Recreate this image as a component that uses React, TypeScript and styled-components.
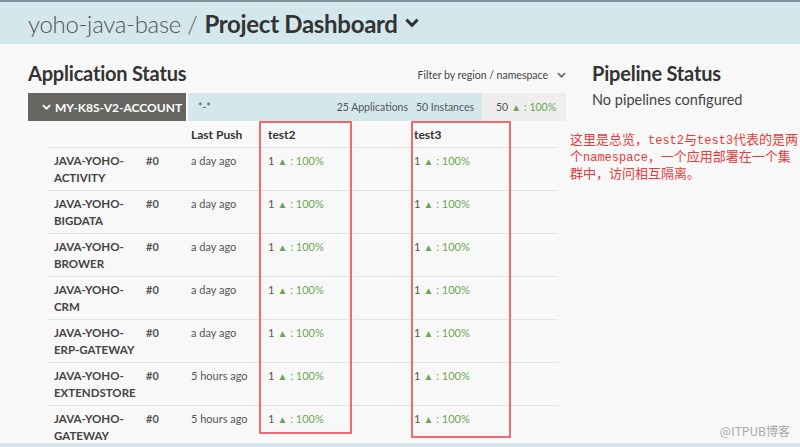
import React from "react";
import styled, { createGlobalStyle } from "styled-components";

const Global = createGlobalStyle`
  html, body { margin: 0; padding: 0; background: #f8f8f8; }
  body { font-family: "Lato", "Open Sans", sans-serif; color: #333; width: 800px; height: 447px; overflow: hidden; }
`;

const Page = styled.div`
  position: relative;
  width: 800px;
  height: 447px;
  display: flex;
  flex-direction: column;
  background: #f8f8f8;
`;

const Header = styled.header`
  height: 44px;
  flex-shrink: 0;
  border-top: 2px solid #7d939c;
  background: #d3e7ec;
  display: flex;
  align-items: center;
  padding: 0 0 0 28px;
  box-sizing: border-box;
  font-size: 24px;
  color: #555;
  letter-spacing: -0.3px;
`;

const Light = styled.span`
  font-weight: 300;
  margin-right: 7px;
`;

const Strong = styled.span`
  font-weight: 700;
  color: #333;
  display: flex;
  align-items: center;
  gap: 7px;
`;

const Main = styled.main`
  flex: 1;
  min-height: 0;
  overflow: hidden;
  display: flex;
  align-items: flex-start;
  padding: 11px 0 0 28px;
  gap: 26px;
`;

const Left = styled.section`
  width: 538px;
  flex-shrink: 0;
  display: flex;
  flex-direction: column;
`;

const TitleRow = styled.div`
  display: flex;
  flex-shrink: 0;
  justify-content: space-between;
  align-items: flex-end;
  height: 30px;
  margin-bottom: 8px;
`;

const H2 = styled.h2`
  margin: 0;
  font-size: 20px;
  font-weight: 700;
  color: #333;
  letter-spacing: -0.2px;
`;

const Filter = styled.div`
  font-size: 10.5px;
  color: #444;
  display: flex;
  align-items: center;
  gap: 9px;
  padding-bottom: 4px;
`;

const AccountBar = styled.div`
  display: flex;
  flex-shrink: 0;
  height: 28px;
  font-size: 10.5px;
`;

const Account = styled.div`
  width: 158px;
  background: #666562;
  color: #fff;
  font-weight: 700;
  font-size: 12px;
  display: flex;
  align-items: center;
  gap: 4px;
  padding-left: 14px;
  box-sizing: border-box;
  margin-right: 2px;
`;

const Summary = styled.div`
  flex: 1;
  background: #d3e7ec;
  display: flex;
  align-items: center;
  padding: 0 8px 0 10px;
  color: #555;
`;

const Spacer = styled.span`
  flex: 1;
`;

const Count = styled.span`
  margin-left: 8px;
`;

const Totals = styled.div`
  width: 84px;
  background: #eeeeee;
  display: flex;
  align-items: center;
  padding-left: 14px;
  box-sizing: border-box;
  color: #555;
`;

const Table = styled.div`
  margin-left: 20px;
  width: 510px;
`;

const Row = styled.div<{ $head?: boolean }>`
  display: grid;
  grid-template-columns: 98px 45px 77px 146px 1fr;
  height: ${(p) => (p.$head ? "26px" : "42px")};
  border-bottom: 1px solid #e3e3e3;
  box-sizing: content-box;
  align-items: ${(p) => (p.$head ? "center" : "start")};
  font-size: 11px;
  color: #555;
`;

const HeadCell = styled.div`
  font-weight: 700;
  font-size: 12px;
  color: #333;
`;

const Name = styled.div`
  padding: 4px 0 0 6px;
  font-weight: 700;
  font-size: 11.5px;
  line-height: 17px;
  color: #444;
`;

const Cell = styled.div`
  padding-top: 4px;
  line-height: 17px;
`;

const BoldCell = styled(Cell)`
  font-weight: 700;
  color: #555;
`;

const Health = styled.span`
  color: #555;
  span { color: #6aa84f; }
  i { font-style: normal; color: #6aa84f; font-size: 10px; margin: 0 3px; }
`;

const Right = styled.section`
  display: flex;
  flex-direction: column;
  width: 210px;
`;

const PipeTitle = styled(H2)`
  height: 30px;
  display: flex;
  align-items: flex-end;
`;

const NoPipe = styled.div`
  font-size: 14.5px;
  line-height: 18px;
  color: #444;
  margin-top: 6px;
`;

const Note = styled.div`
  margin: 21px 0 0 -22px;
  width: 232px;
  font-family: "Noto Sans CJK SC", "Liberation Mono", monospace;
  font-size: 13px;
  line-height: 17px;
  color: #e83b3b;
`;

const Mono = styled.span`
  font-family: "Liberation Mono", monospace;
  font-size: 12px;
  line-height: 0;
`;

const RedBox = styled.div<{ $x: number; $y: number; $w: number; $h: number }>`
  position: absolute;
  left: ${(p) => p.$x}px;
  top: ${(p) => p.$y}px;
  width: ${(p) => p.$w}px;
  height: ${(p) => p.$h}px;
  border: 2px solid #ec6a70;
  box-sizing: border-box;
  pointer-events: none;
`;

const Footer = styled.div`
  height: 4px;
  flex-shrink: 0;
  background: #d3e7ec;
`;

const Watermark = styled.div`
  position: absolute;
  right: 10px;
  bottom: 8px;
  font-family: "Noto Sans CJK SC", sans-serif;
  font-size: 12px;
  color: #a9a9a9;
`;

const Chevron = ({ size = 10, color = "currentColor" }: { size?: number; color?: string }) => (
  <svg width={size} height={size * 0.7} viewBox="0 0 10 7">
    <path d="M1 1.2 L5 5.2 L9 1.2" fill="none" stroke={color} strokeWidth="2.2" />
  </svg>
);

const Hl = ({ n }: { n: number }) => (
  <Health>
    {n}
    <i>▲</i>
    <span>: 100%</span>
  </Health>
);

const apps = [
  ["ACTIVITY", "a day ago"],
  ["BIGDATA", "a day ago"],
  ["BROWER", "a day ago"],
  ["CRM", "a day ago"],
  ["ERP-GATEWAY", "a day ago"],
  ["EXTENDSTORE", "5 hours ago"],
  ["GATEWAY", "5 hours ago"],
];

export default function App() {
  return (
    <Page>
      <Global />
      <Header>
        <Light>yoho-java-base /</Light>
        <Strong>
          Project Dashboard <Chevron size={14} color="#333" />
        </Strong>
      </Header>
      <Main>
        <Left>
          <TitleRow>
            <H2>Application Status</H2>
            <Filter>
              Filter by region / namespace <Chevron size={9} color="#777" />
            </Filter>
          </TitleRow>
          <AccountBar>
            <Account>
              <Chevron size={9} color="#fff" /> MY-K8S-V2-ACCOUNT
            </Account>
            <Summary>
              *-*
              <Spacer />
              25 Applications
              <Count>50 Instances</Count>
            </Summary>
            <Totals>
              <Hl n={50} />
            </Totals>
          </AccountBar>
          <Table>
            <Row $head>
              <div />
              <div />
              <HeadCell>Last Push</HeadCell>
              <HeadCell>test2</HeadCell>
              <HeadCell>test3</HeadCell>
            </Row>
            {apps.map(([n, t]) => (
              <Row key={n}>
                <Name>
                  JAVA-YOHO-
                  <br />
                  {n}
                </Name>
                <BoldCell>#0</BoldCell>
                <Cell>{t}</Cell>
                <Cell>
                  <Hl n={1} />
                </Cell>
                <Cell>
                  <Hl n={1} />
                </Cell>
              </Row>
            ))}
          </Table>
        </Left>
        <Right>
          <PipeTitle>Pipeline Status</PipeTitle>
          <NoPipe>No pipelines configured</NoPipe>
          <Note>
            这里是总览，<Mono>test2</Mono>与<Mono>test3</Mono>代表的是两个<Mono>namespace</Mono>，一个应用部署在一个集群中，访问相互隔离。
          </Note>
        </Right>
      </Main>
      <Footer />
      <RedBox $x={259} $y={121} $w={93} $h={313} />
      <RedBox $x={411} $y={121} $w={100} $h={317} />
      <Watermark>@ITPUB博客</Watermark>
    </Page>
  );
}
